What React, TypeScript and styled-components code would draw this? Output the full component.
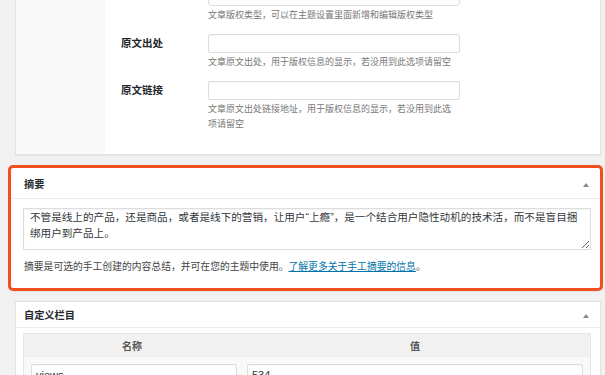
import styled, { createGlobalStyle } from "styled-components";

const GlobalStyle = createGlobalStyle`
	html, body {
		margin: 0;
		padding: 0;
		background: #f1f1f1;
		font-family: "Liberation Sans", "Noto Sans CJK SC", sans-serif;
		color: #23282d;
	}
`;

const Page = styled.div`
	display: flex;
	flex-direction: column;
	gap: 10px;
	margin-top: -24px;
	padding: 0 4px 0 15px;
	height: 399px;
	overflow: hidden;
`;

const Panel = styled.div<{ $highlight?: boolean }>`
	background: #ffffff;
	border: ${(p) => (p.$highlight ? "3px solid #f24e1e" : "1px solid #e2e2e2")};
	border-radius: ${(p) => (p.$highlight ? "5px" : "0")};
	margin: ${(p) => (p.$highlight ? "0 -2px 0 -7px" : "0")};
	box-shadow: 0 1px 1px rgba(0, 0, 0, 0.04);
`;

const MetaPanel = styled(Panel)`
	display: flex;
`;

const Sidebar = styled.div`
	width: 89px;
	background: #f9f9f9;
`;

const FormTable = styled.div`
	display: flex;
	flex-direction: column;
	gap: 11px;
	padding: 10px 0 22px 16px;
`;

const FieldRow = styled.div`
	display: grid;
	grid-template-columns: 87px 252px;
`;

const Label = styled.div`
	font-size: 10.5px;
	font-weight: 700;
	line-height: 19px;
	color: #23282d;
`;

const Field = styled.div`
	display: flex;
	flex-direction: column;
	gap: 2px;
`;

const Input = styled.div<{ $select?: boolean }>`
	position: relative;
	height: 19px;
	box-sizing: border-box;
	border: 1px solid #dddddd;
	border-radius: ${(p) => (p.$select ? "4px" : "2px")};
	background: #ffffff;
	box-shadow: inset 0 1px 2px rgba(0, 0, 0, 0.04);
	font-size: 10.5px;
	line-height: 17px;
	padding: 0 4px;
	color: #333333;
`;

const SelectArrow = styled.span`
	position: absolute;
	right: 5px;
	top: 4px;
	width: 4px;
	height: 4px;
	border-right: 1px solid #888;
	border-bottom: 1px solid #888;
	transform: rotate(45deg);
`;

const Help = styled.div`
	max-width: 245px;
	font-size: 9px;
	line-height: 15px;
	color: #777777;
`;

const PanelHeader = styled.div<{ $highlight?: boolean }>`
	display: flex;
	align-items: center;
	justify-content: space-between;
	padding: ${(p) => (p.$highlight ? "10px 11px 6px 13px" : "7px 11px 4px 8px")};
	border-bottom: 1px solid #eeeeee;
	font-size: 10.2px;
	font-weight: 700;
	line-height: 14px;
	color: #23282d;
`;

const Toggle = styled.span`
	width: 0;
	height: 0;
	border-left: 3px solid transparent;
	border-right: 3px solid transparent;
	border-bottom: 4px solid #888888;
`;

const PanelBody = styled.div<{ $highlight?: boolean }>`
	padding: ${(p) => (p.$highlight ? "9px 9px 14px 12px" : "5px 9px 0 7px")};
`;

const Excerpt = styled.textarea`
	display: block;
	width: 100%;
	height: 42px;
	box-sizing: border-box;
	margin: 0;
	padding: 0 5px 0 6px;
	border: 1px solid #dddddd;
	border-radius: 0;
	box-shadow: inset 0 1px 2px rgba(0, 0, 0, 0.05);
	font-family: "Liberation Sans", "Noto Sans CJK SC", sans-serif;
	font-size: 10.6px;
	line-height: 16px;
	color: #32373c;
	overflow: hidden;
	outline: none;
`;

const Note = styled.p`
	margin: 10px 0 0 1px;
	font-size: 9.8px;
	line-height: 14px;
	color: #444444;

	a {
		color: #0073aa;
		text-decoration: underline;
	}
`;

const FieldsTable = styled.div`
	border: 1px solid #e5e5e5;
	background: #f9f9f9;
`;

const TableRow = styled.div<{ $head?: boolean }>`
	display: grid;
	grid-template-columns: 216px 1fr;
	background: ${(p) => (p.$head ? "#f1f1f1" : "transparent")};
	height: ${(p) => (p.$head ? "23px" : "auto")};
`;

const HeadCell = styled.div`
	display: flex;
	align-items: center;
	justify-content: center;
	font-size: 10px;
	font-weight: 600;
	color: #555555;
`;

const Cell = styled.div<{ $first?: boolean }>`
	padding: ${(p) => (p.$first ? "7px 3px 8px 7px" : "7px 7px 8px 7px")};
`;

const CellInput = styled(Input)`
	height: 22px;
	font-size: 11px;
	line-height: 20px;
`;

export default function App() {
	return (
		<>
			<GlobalStyle />
			<Page>
				<MetaPanel>
					<Sidebar />
					<FormTable>
						<FieldRow>
							<Label />
							<Field>
								<Input $select>
									<SelectArrow />
								</Input>
								<Help>文章版权类型，可以在主题设置里面新增和编辑版权类型</Help>
							</Field>
						</FieldRow>
						<FieldRow>
							<Label>原文出处</Label>
							<Field>
								<Input />
								<Help>文章原文出处，用于版权信息的显示，若没用到此选项请留空</Help>
							</Field>
						</FieldRow>
						<FieldRow>
							<Label>原文链接</Label>
							<Field>
								<Input />
								<Help>文章原文出处链接地址，用于版权信息的显示，若没用到此选项请留空</Help>
							</Field>
						</FieldRow>
					</FormTable>
				</MetaPanel>

				<Panel $highlight>
					<PanelHeader $highlight>
						<span>摘要</span>
						<Toggle />
					</PanelHeader>
					<PanelBody $highlight>
						<Excerpt
							readOnly
							defaultValue="不管是线上的产品，还是商品，或者是线下的营销，让用户“上瘾”，是一个结合用户隐性动机的技术活，而不是盲目捆绑用户到产品上。"
						/>
						<Note>
							摘要是可选的手工创建的内容总结，并可在您的主题中使用。
							<a href="#">了解更多关于手工摘要的信息</a>。
						</Note>
					</PanelBody>
				</Panel>

				<Panel>
					<PanelHeader>
						<span>自定义栏目</span>
						<Toggle />
					</PanelHeader>
					<PanelBody>
						<FieldsTable>
							<TableRow $head>
								<HeadCell>名称</HeadCell>
								<HeadCell>值</HeadCell>
							</TableRow>
							<TableRow>
								<Cell $first>
									<CellInput>views</CellInput>
								</Cell>
								<Cell>
									<CellInput>534</CellInput>
								</Cell>
							</TableRow>
						</FieldsTable>
					</PanelBody>
				</Panel>
			</Page>
		</>
	);
}
